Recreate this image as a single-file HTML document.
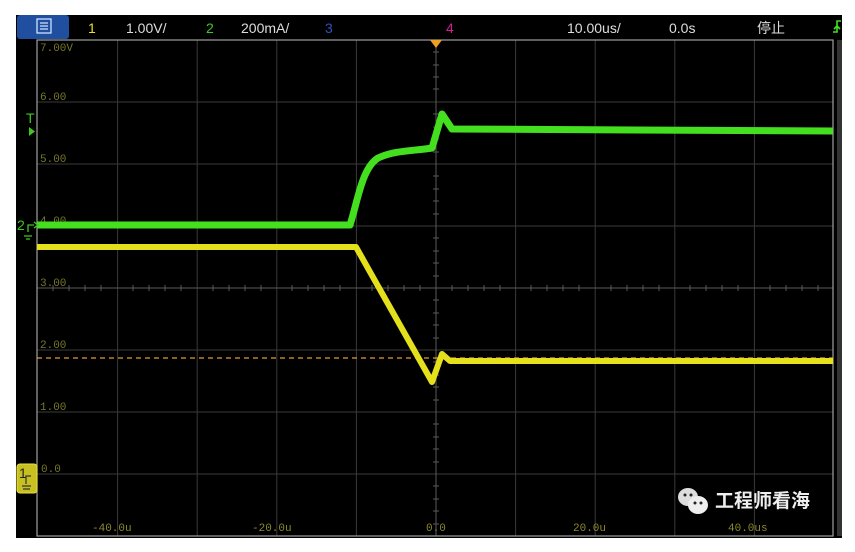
<!DOCTYPE html>
<html><head><meta charset="utf-8"><style>
html,body{margin:0;padding:0;background:#fff;width:855px;height:552px;overflow:hidden}
svg{display:block}
.t{font-family:"Liberation Sans","Noto Sans CJK SC",sans-serif;font-size:14px}
.m{font-family:"Liberation Mono",monospace;font-size:11px}
</style></head><body>
<svg width="855" height="552" xmlns="http://www.w3.org/2000/svg">
<rect x="16" y="15" width="826" height="523" fill="#000"/>
<rect x="17" y="15" width="52" height="24" rx="3" fill="#1f4f9e"/>
<rect x="37" y="19" width="14" height="14" fill="none" stroke="#cfe0ff" stroke-width="1.3"/>
<path d="M40 23h8M40 26h8M40 29h8" stroke="#cfe0ff" stroke-width="1.2"/>
<text class="t" x="88" y="33" fill="#e8e020">1</text>
<text class="t" x="126" y="33" fill="#ddd">1.00V/</text>
<text class="t" x="206" y="33" fill="#3ec81e">2</text>
<text class="t" x="241" y="33" fill="#ddd">200mA/</text>
<text class="t" x="325" y="33" fill="#3050c0">3</text>
<text class="t" x="446" y="33" fill="#d02090">4</text>
<text class="t" x="567" y="33" fill="#ddd">10.00us/</text>
<text class="t" x="669" y="33" fill="#ddd">0.0s</text>
<text class="t" x="757" y="33" fill="#ddd">停止</text>
<path d="M833 32h4v-11h4M837 26l-3 3M837 26l3 3" stroke="#3ee020" stroke-width="1.6" fill="none"/>
<g stroke="#3a3a3a" stroke-width="1">
<path d="M117.6 40V536M197.2 40V536M276.8 40V536M356.4 40V536M515.6 40V536M595.2 40V536M674.8 40V536M754.4 40V536"/>
<path d="M37 102H833M37 164H833M37 226H833M37 350H833M37 412H833M37 474H833"/>
</g>
<g stroke="#5a5a5a" stroke-width="1">
<path d="M436 40V536M37 288H833"/>
<path d="M433 52h6M433 65h6M433 77h6M433 89h6M433 114h6M433 127h6M433 139h6M433 152h6M433 176h6M433 189h6M433 201h6M433 214h6M433 238h6M433 251h6M433 263h6M433 276h6M433 300h6M433 313h6M433 325h6M433 338h6M433 362h6M433 375h6M433 387h6M433 400h6M433 424h6M433 437h6M433 449h6M433 462h6M433 486h6M433 499h6M433 511h6M433 524h6"/>
<path d="M53 285v6M69 285v6M85 285v6M101 285v6M133 285v6M149 285v6M165 285v6M181 285v6M213 285v6M229 285v6M245 285v6M261 285v6M292 285v6M308 285v6M324 285v6M340 285v6M372 285v6M388 285v6M404 285v6M420 285v6M452 285v6M468 285v6M484 285v6M500 285v6M531 285v6M547 285v6M563 285v6M579 285v6M611 285v6M627 285v6M643 285v6M659 285v6M690 285v6M706 285v6M722 285v6M738 285v6M770 285v6M786 285v6M802 285v6M818 285v6"/>
</g>
<rect x="37" y="40" width="796" height="496" fill="none" stroke="#a0a0a0" stroke-width="1.2"/>
<rect x="837" y="40" width="5" height="496" fill="#333"/>
<g class="m" fill="#77772a">
<text x="40" y="51">7.00V</text><text x="40" y="100">6.00</text><text x="40" y="162">5.00</text><text x="40" y="224">4.00</text>
<text x="40" y="286">3.00</text><text x="40" y="348">2.00</text><text x="40" y="410">1.00</text><text x="41" y="472">0.0</text>
</g>
<g class="m" fill="#8a8a2a">
<text x="92" y="531">-40.0u</text><text x="252" y="531">-20.0u</text><text x="426" y="531">0.0</text><text x="573" y="531">20.0u</text><text x="728" y="531">40.0us</text>
</g>
<path d="M430 40h12l-6 8z" fill="#f0a020"/>
<path d="M37 358H833" stroke="#e89a30" stroke-width="1.3" stroke-dasharray="5 4"/>
<path d="M37 225L350 225C358 200 362 168 378 158C395 150 415 151 432 148L442 114L452 129L833 131" fill="none" stroke="#44e020" stroke-width="7" stroke-linejoin="round"/>
<path d="M37 247L356 247L432 382L442 354L450 361L833 361" fill="none" stroke="#e4e01c" stroke-width="6" stroke-linejoin="round"/>
<text class="t" x="26" y="123" fill="#3ec81e" font-size="11">T</text>
<path d="M29 127l6 4.5-6 4.5z" fill="#3ec81e"/>
<text class="t" x="17" y="230" fill="#3ec81e" font-size="12">2</text>
<path d="M28 232v-7h6M34 222l4 3-4 3M24 236h8M26 239h4" stroke="#3ec81e" stroke-width="1.3" fill="none"/>
<rect x="17" y="464" width="20" height="29" rx="3" fill="#c8c020" stroke="#e8e040"/>
<text class="t" x="19" y="478" fill="#222" font-size="11">1</text>
<path d="M26 484v-8h5M22 486h9M23 489h7" stroke="#333" stroke-width="1.2" fill="none"/>
<ellipse cx="688" cy="497" rx="10" ry="9" fill="#ddd"/>
<ellipse cx="698" cy="505" rx="10" ry="9" fill="#eee"/>
<circle cx="685" cy="495" r="1.5" fill="#222"/><circle cx="691" cy="495" r="1.5" fill="#222"/>
<circle cx="695" cy="503" r="1.5" fill="#222"/><circle cx="701" cy="503" r="1.5" fill="#222"/>
<text x="715" y="507" font-family="'Noto Sans CJK SC',sans-serif" font-size="19" font-weight="bold" fill="#eee">工程师看海</text>
</svg>
</body></html>
